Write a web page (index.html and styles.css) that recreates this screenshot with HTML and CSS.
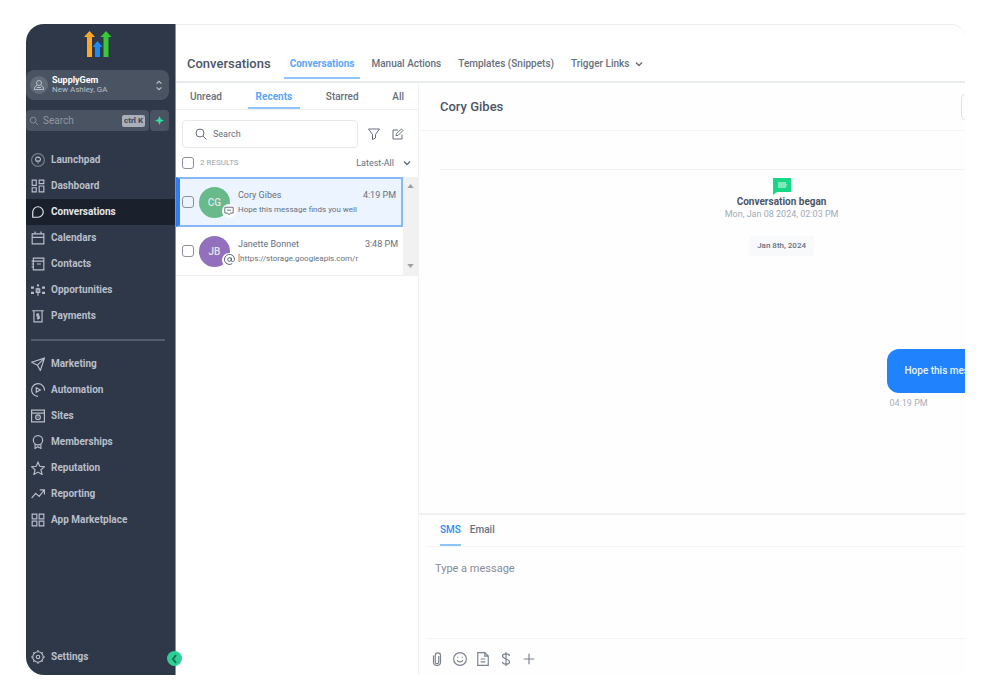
FILE: index.html
```
<!DOCTYPE html>
<html lang="en">
<head>
  <meta charset="UTF-8">
  <meta name="viewport" content="width=device-width, initial-scale=1.0">
  <title>Conversations</title>
  <link rel="stylesheet" href="styles.css">
</head>
<body>
  <div class="app">
    <aside class="sidebar">
      <svg class="logo" viewBox="0 0 28 27" width="28" height="27">
        <path fill="#ffa726" d="M5.500 0l5.500 6H8v20H3V6H0z"/>
        <path fill="#188bf6" d="M13.500 10l5 6H16v10h-5V16H8.500z"/>
        <path fill="#37ca37" d="M22 0l5.500 6h-3v20h-5V6h-3z"/>
      </svg>

      <button class="account">
        <span class="account-icon">
          <svg class="icon" viewBox="0 0 24 24" width="12" height="12"><circle cx="12" cy="8" r="5"/><path d="M8 13l-5 4v4h18v-4l-5-4M8 17h8"/></svg>
        </span>
        <span class="account-text">
          <strong>SupplyGem</strong>
          <span>New Ashley, GA</span>
        </span>
        <svg class="icon" viewBox="0 0 10 18" width="6" height="11"><path d="M1 6l4-4 4 4M1 12l4 4 4-4"/></svg>
      </button>

      <div class="quick">
        <label class="quick-search">
          <svg class="icon" viewBox="0 0 24 24" width="10" height="10"><circle cx="10" cy="10" r="7"/><path d="M15 15l7 7"/></svg>
          <input type="text" placeholder="Search" aria-label="Search">
          <kbd>ctrl K</kbd>
        </label>
        <button class="quick-add" aria-label="Quick actions">
          <svg viewBox="0 0 10 10" width="9" height="9"><path d="M5 0l1.500 3.500L10 5 6.500 6.500 5 10 3.500 6.500 0 5l3.500-1.500z" fill="#2be0a0"/></svg>
        </button>
      </div>

      <nav class="menu">
        <a href="#"><svg class="icon" viewBox="0 0 24 24"><circle cx="12" cy="12" r="11" opacity=".5"/><path d="M9 14c-3-4 0-7 3-7s6 3 3 7zM11 17h2"/></svg>Launchpad</a>
        <a href="#"><svg class="icon" viewBox="0 0 24 24"><path d="M2 2h7v9H2zM14 2h8v6h-8zM2 15h7v7H2zM14 12h8v10h-8z"/></svg>Dashboard</a>
        <a href="#" class="active"><svg class="icon" viewBox="0 0 24 24"><path d="M3 21v-9a9 9 0 1 1 9 9z"/></svg>Conversations</a>
        <a href="#"><svg class="icon" viewBox="0 0 24 24"><path d="M2 5h20v17H2zM2 11h20M7 1v5M17 1v5"/></svg>Calendars</a>
        <a href="#"><svg class="icon" viewBox="0 0 24 24"><path d="M4 2h18v20H4zM4 7h18M10 12h7M1 7h4M1 12h4M1 17h4"/></svg>Contacts</a>
        <a href="#"><svg class="icon" viewBox="0 0 24 24"><path d="M12 8v14M8 10h8M9 10v6h6v-6M1 7h3v2H1zM1 16h3v2H1zM20 7h3v2h-3zM20 16h3v2h-3z"/><circle cx="12" cy="4" r="1"/></svg>Opportunities</a>
        <a href="#"><svg class="icon" viewBox="0 0 24 24"><path d="M2 3h20M5 3v19h14V3M14 9h-4v3h4v4h-4M12 7v11"/></svg>Payments</a>
      </nav>
      <hr>
      <nav class="menu">
        <a href="#"><svg class="icon" viewBox="0 0 24 24"><path d="M1 9l22-7-7 21-5-9zM23 2L11 14"/></svg>Marketing</a>
        <a href="#"><svg class="icon" viewBox="0 0 24 24"><path d="M12 23A11 11 0 1 1 23 13M9 8v8l7-4z"/></svg>Automation</a>
        <a href="#"><svg class="icon" viewBox="0 0 24 24"><path d="M1 2h22v20H1zM1 7h22"/><circle cx="12" cy="14" r="4"/><path d="M12 13v2"/></svg>Sites</a>
        <a href="#"><svg class="icon" viewBox="0 0 24 24"><circle cx="12" cy="9" r="8"/><path d="M7 16v7l5-3 5 3v-7"/></svg>Memberships</a>
        <a href="#"><svg class="icon" viewBox="0 0 24 24"><path d="M12 2l3 7 8 1-6 5 2 8-7-4-7 4 2-8-6-5 8-1z"/></svg>Reputation</a>
        <a href="#"><svg class="icon" viewBox="0 0 24 24"><path d="M1 19l7-8 6 5 8-10M15 5h8v8"/></svg>Reporting</a>
        <a href="#"><svg class="icon" viewBox="0 0 24 24"><path d="M2 2h8v8H2zM14 2h8v8h-8zM2 14h8v8H2zM14 14h8v8h-8z"/></svg>App Marketplace</a>
      </nav>
      <nav class="menu menu-bottom">
        <a href="#"><svg class="icon" viewBox="0 0 24 24"><circle cx="12" cy="12" r="9"/><circle cx="12" cy="12" r="3"/><path d="M12 0v3M12 21v3M0 12h3M21 12h3M4 4l2 2M18 18l2 2M20 4l-2 2M6 18l-2 2"/></svg>Settings</a>
      </nav>
      <button class="collapse" aria-label="Collapse sidebar">
        <svg viewBox="0 0 10 10" width="10" height="10"><path d="M6 1L3 5l3 4" fill="none" stroke="#1b6b52" stroke-width="2"/></svg>
      </button>
    </aside>

    <main class="main">
      <header class="topbar">
        <h1>Conversations</h1>
        <nav class="topnav">
          <a href="#" class="active">Conversations</a>
          <a href="#">Manual Actions</a>
          <a href="#">Templates (Snippets)</a>
          <a href="#">Trigger Links
            <svg class="icon" viewBox="0 0 10 8" width="8" height="6"><path d="M1 2l4 4 4-4"/></svg>
          </a>
        </nav>
      </header>

      <div class="panes">
        <section class="inbox">
          <nav class="inbox-tabs">
            <a href="#">Unread</a>
            <a href="#" class="active">Recents</a>
            <a href="#">Starred</a>
            <a href="#">All</a>
          </nav>

          <div class="inbox-search">
            <label class="search-box">
              <svg class="icon" viewBox="0 0 24 24" width="12" height="12"><circle cx="10" cy="10" r="8"/><path d="M16 16l7 7"/></svg>
              <input type="text" placeholder="Search" aria-label="Search conversations">
            </label>
            <button aria-label="Filter"><svg class="icon" viewBox="0 0 24 24" width="12" height="12"><path d="M1 2h22l-8 11v7l-6 3V13z"/></svg></button>
            <button aria-label="New conversation"><svg class="icon" viewBox="0 0 24 24" width="12" height="12"><path d="M12 4H2v18h18V13M9 11l10-9 3 3-10 10H8z"/></svg></button>
          </div>

          <div class="results">
            <input type="checkbox" id="all">
            <label for="all">2 RESULTS</label>
            <button class="sort">Latest-All
              <svg class="icon" viewBox="0 0 10 8" width="8" height="6"><path d="M1 2l4 4 4-4"/></svg>
            </button>
          </div>

          <div class="list">
            <ul>
              <li class="selected">
                <input type="checkbox" aria-label="Select Cory Gibes">
                <span class="avatar green">CG
                  <span class="channel"><svg class="icon" viewBox="0 0 24 24" width="10" height="10"><path d="M2 3h20v14h-7l-3 4-3-4H2zM7 10h10"/></svg></span>
                </span>
                <div class="item">
                  <div class="item-top"><span>Cory Gibes</span><time>4:19 PM</time></div>
                  <p>Hope this message finds you well</p>
                </div>
              </li>
              <li>
                <input type="checkbox" aria-label="Select Janette Bonnet">
                <span class="avatar purple">JB
                  <span class="channel"><svg class="icon" viewBox="0 0 24 24" width="11" height="11"><circle cx="12" cy="12" r="4"/><path d="M16 8v6c0 4 7 3 7-2a11 11 0 1 0-5 9"/></svg></span>
                </span>
                <div class="item">
                  <div class="item-top"><span>Janette Bonnet</span><time>3:48 PM</time></div>
                  <p>[https://storage.googleapis.com/r</p>
                </div>
              </li>
            </ul>
            <div class="scroll">
              <svg viewBox="0 0 8 5" width="7" height="4"><path d="M0 5l4-5 4 5z"/></svg>
              <svg viewBox="0 0 8 5" width="7" height="4"><path d="M0 0l4 5 4-5z"/></svg>
            </div>
          </div>
        </section>

        <section class="chat">
          <div class="chat-inner">
            <header class="chat-header">
              <h2>Cory Gibes</h2>
              <button class="chat-action" aria-label="Contact actions"></button>
            </header>

            <div class="thread">
              <div class="began">
                <svg viewBox="0 0 18 17" width="18" height="17"><path fill="#17d985" d="M0 0h18v14H4l-4 3z"/><path fill="#7fe9bb" d="M5 4h8v6H5z"/><path fill="#7fe9bb" d="M12 6h2v2h-2z"/></svg>
                <strong>Conversation began</strong>
                <span>Mon, Jan 08 2024, 02:03 PM</span>
              </div>
              <span class="day">Jan 8th, 2024</span>
              <div class="message">
                <p>Hope this message finds you well</p>
                <time>04:19 PM</time>
              </div>
            </div>

            <div class="composer">
              <nav class="composer-tabs">
                <a href="#" class="active">SMS</a>
                <a href="#">Email</a>
              </nav>
              <textarea placeholder="Type a message" aria-label="Message"></textarea>
              <div class="tools">
                <button aria-label="Attach file"><svg class="icon" viewBox="0 0 24 24"><path d="M6 6v11a6 6 0 0 0 12 0V6a4 4 0 0 0-9 0v11a3 3 0 0 0 6 0V7"/></svg></button>
                <button aria-label="Emoji"><svg class="icon" viewBox="0 0 24 24"><circle cx="12" cy="12" r="11"/><path d="M7 14c2 4 8 4 10 0M8 8v2M16 8v2"/></svg></button>
                <button aria-label="Template"><svg class="icon" viewBox="0 0 24 24"><path d="M3 1h12l6 6v16H3zM15 1v6h6M8 12h8M8 17h8"/></svg></button>
                <button aria-label="Request payment"><svg class="icon" viewBox="0 0 24 24"><path d="M18 7c0-5-12-5-12 0 0 6 12 4 12 10 0 5-12 5-12 0M12 0v24"/></svg></button>
                <button aria-label="More"><svg class="icon" viewBox="0 0 24 24"><path d="M12 3v18M3 12h18"/></svg></button>
              </div>
            </div>
          </div>
        </section>
      </div>
    </main>
  </div>
</body>
</html>
```
FILE: styles.css
```
* {
  box-sizing: border-box;
}
body {
  margin: 0;
  padding: 24px 35px 25px 26px;
  min-height: 100vh;
  display: flex;
  background: #fff;
  color: #667080;
  font-family: Roboto, sans-serif;
  font-size: 10px;
  line-height: 12px;
}
h1, h2, p, ul {
  margin: 0;
  padding: 0;
}
a {
  color: inherit;
  text-decoration: none;
}
button, input, textarea {
  font: inherit;
  color: inherit;
  background: none;
  border: 0;
  padding: 0;
  margin: 0;
  outline: none;
}
button {
  display: flex;
  align-items: center;
  cursor: pointer;
}
svg {
  display: block;
  flex: none;
}
.icon {
  fill: none;
  stroke: currentColor;
  stroke-width: 2;
}
.app {
  flex: 1;
  min-width: 0;
  display: flex;
  border-radius: 18px;
}

/* sidebar */
.sidebar {
  position: relative;
  flex: none;
  width: 150px;
  display: flex;
  flex-direction: column;
  background: #2f3849;
  border-right: 1px solid #8b93a0;
  border-radius: 18px 0 0 18px;
  color: #b9bfc9;
}
.logo {
  margin: 7px 0 0 58px;
}
.account {
  height: 30px;
  margin: 12px 6px 0 0;
  padding: 0 7px 0 4px;
  gap: 4px;
  background: #4a5362;
  border-radius: 8px;
  text-align: left;
}
.account-icon {
  display: flex;
  align-items: center;
  justify-content: center;
  width: 18px;
  height: 18px;
  border-radius: 50%;
  background: #626b79;
}
.account-text {
  flex: 1;
  display: flex;
  flex-direction: column;
  font-size: 8px;
  line-height: 10px;
}
.account-text strong {
  font-size: 9px;
  color: #fff;
}
.quick {
  display: flex;
  gap: 1px;
  height: 21px;
  margin: 10px 6px 16px 0;
}
.quick-search {
  flex: 1;
  min-width: 0;
  display: flex;
  align-items: center;
  gap: 4px;
  padding: 0 4px 0 3px;
  background: #4a5362;
  border-radius: 4px;
  color: #9098a4;
}
.quick-search input {
  flex: 1;
  min-width: 0;
}
::placeholder {
  color: inherit;
  opacity: 1;
}
.quick-search kbd {
  padding: 0 2px;
  background: #a9afbb;
  border-radius: 2px;
  color: #3c4657;
  font: bold 8px/12px Roboto, sans-serif;
}
.quick-add {
  width: 19px;
  justify-content: center;
  background: #4a5362;
  border-radius: 4px;
}
.menu {
  display: flex;
  flex-direction: column;
  font-weight: 700;
}
.menu a {
  display: flex;
  align-items: center;
  gap: 6px;
  height: 26px;
  padding-left: 5px;
}
.menu svg {
  width: 14px;
  height: 14px;
}
.menu .active {
  background: #1a202c;
  color: #e4e7ec;
}
.sidebar hr {
  width: 134px;
  height: 2px;
  margin: 10px 0 10px 5px;
  border: 0;
  background: #535c6b;
}
.menu-bottom {
  margin-top: auto;
  margin-bottom: 5px;
}
.collapse {
  position: absolute;
  right: -7px;
  bottom: 9px;
  width: 15px;
  height: 15px;
  justify-content: center;
  border-radius: 50%;
  background: #2ad196;
}

/* main area */
.main {
  flex: 1;
  min-width: 0;
  display: flex;
  flex-direction: column;
  border-top: 1px solid #ececee;
  border-top-right-radius: 14px;
}
.topbar {
  display: flex;
  align-items: flex-end;
  height: 58px;
  padding-left: 11px;
  border-bottom: 2px solid #e8ebef;
}
.topbar h1 {
  margin-right: 13px;
  padding-bottom: 9px;
  font-size: 13px;
  line-height: 16px;
  font-weight: 500;
  color: #4c5666;
}
.topnav {
  display: flex;
  gap: 5px;
  margin-bottom: 2px;
  font-weight: 500;
  white-space: nowrap;
}
.topnav a {
  display: flex;
  align-items: center;
  gap: 6px;
  padding: 0 6px 7px;
  border-bottom: 2px solid transparent;
}
.topnav .active, .inbox-tabs .active {
  color: #59a6fa;
  border-color: #8fc5fb;
  font-weight: 700;
}
.panes {
  flex: 1;
  min-height: 0;
  display: flex;
}

/* conversation list */
.inbox {
  flex: none;
  width: 243px;
  border-right: 1px solid #f0f1f3;
}
.inbox-tabs {
  display: flex;
  justify-content: space-between;
  height: 27px;
  padding: 0 6px;
  border-bottom: 1px solid #eff0f2;
  font-weight: 500;
}
.inbox-tabs a {
  padding: 8px 8px 0;
  border-bottom: 2px solid transparent;
}
.inbox-search {
  display: flex;
  align-items: center;
  gap: 8px;
  padding: 10px 12px 0 6px;
}
.inbox-search button {
  padding: 0 2px;
}
.search-box {
  flex: 1;
  min-width: 0;
  display: flex;
  align-items: center;
  gap: 6px;
  height: 28px;
  padding-left: 12px;
  border: 1px solid #e6e8eb;
  border-radius: 4px;
  font-size: 9px;
}
.search-box input {
  width: 100%;
}
input[type="checkbox"] {
  appearance: none;
  flex: none;
  width: 12px;
  height: 12px;
  border: 1px solid #8d929a;
  border-radius: 3px;
}
.results {
  display: flex;
  align-items: center;
  gap: 6px;
  height: 29px;
  padding: 0 7px 0 6px;
}
.results label {
  flex: 1;
  font-size: 8px;
  color: #9da2aa;
}
.sort {
  gap: 9px;
  font-size: 9px;
}
.list {
  display: flex;
  border-bottom: 1px solid #f1f1f3;
}
.list ul {
  flex: 1;
  min-width: 0;
  list-style: none;
}
.list li {
  display: flex;
  align-items: center;
  gap: 5px;
  height: 48px;
  padding: 0 5px 0 6px;
}
.list .selected {
  height: 50px;
  padding: 0 5px 0 2px;
  background: #ebf4ff;
  border: 2px solid #85b8f8;
  border-left: 4px solid #2e7cf6;
}
.avatar {
  position: relative;
  flex: none;
  width: 31px;
  height: 31px;
  border-radius: 50%;
  color: #e3e6ea;
  font-weight: 500;
  line-height: 31px;
  text-align: center;
}
.green {
  background: #68ba8a;
}
.purple {
  background: #9270bd;
}
.channel {
  position: absolute;
  right: -6px;
  bottom: 0;
  display: flex;
  align-items: center;
  justify-content: center;
  width: 14px;
  height: 14px;
  border-radius: 50%;
  background: #fff;
  color: #4f5968;
}
.item {
  flex: 1;
  min-width: 0;
  padding-left: 3px;
  font-size: 9px;
}
.item-top {
  display: flex;
  justify-content: space-between;
  margin-bottom: 4px;
}
.item p {
  overflow: hidden;
  white-space: nowrap;
  font-size: 8px;
  line-height: 10px;
}
.scroll {
  display: flex;
  flex-direction: column;
  justify-content: space-between;
  align-items: center;
  width: 15px;
  padding: 7px 0;
  background: #f1f1f1;
  fill: #a0a0a0;
}

/* chat, runs past the right edge of the window */
.chat {
  flex: 1;
  min-width: 0;
  overflow: hidden;
  background: #fefefe;
}
.chat-inner {
  width: 133%;
  height: 100%;
  display: flex;
  flex-direction: column;
}
.chat-header {
  display: flex;
  align-items: center;
  justify-content: space-between;
  height: 48px;
  padding: 0 22px 0 21px;
  border-bottom: 1px solid #f4f4f6;
}
.chat-header h2 {
  font-size: 13px;
  font-weight: 500;
  color: #4c5666;
}
.chat-action {
  width: 162px;
  height: 26px;
  border: 1px solid #dfe3e8;
  border-radius: 4px;
}
.thread {
  flex: 1;
  display: flex;
  flex-direction: column;
  align-items: center;
  margin: 38px 22px 0 21px;
  border-top: 1px solid #f2f2f4;
}
.began {
  display: flex;
  flex-direction: column;
  align-items: center;
  margin-top: 8px;
}
.began strong {
  margin-top: 1px;
  font-weight: 700;
  color: #4c5666;
}
.began span {
  font-size: 9px;
  color: #a3abb7;
}
.day {
  margin-top: 16px;
  padding: 4px 8px;
  border-radius: 4px;
  background: #f7f9fb;
  font-size: 8px;
  font-weight: 500;
}
.message {
  align-self: flex-end;
  margin: auto 51px 104px 0;
}
.message p {
  padding: 16px 18px;
  border-radius: 12px;
  background: #2182fe;
  color: #e8f2ff;
  font-weight: 500;
  white-space: nowrap;
}
.message time {
  display: block;
  margin: 4px 0 0 3px;
  font-size: 9px;
  color: #a9aeb6;
}

/* composer */
.composer {
  border-top: 2px solid #f1f1f3;
  padding-left: 7px;
}
.composer-tabs {
  display: flex;
  gap: 9px;
  height: 32px;
  padding-left: 14px;
  border-bottom: 1px solid #f4f4f6;
}
.composer-tabs a {
  padding-top: 9px;
  border-bottom: 2px solid transparent;
  font-weight: 500;
}
.composer-tabs .active {
  color: #2e8bfb;
  border-color: #8fc5fb;
}
.composer textarea {
  display: block;
  width: 100%;
  height: 92px;
  padding: 16px 9px;
  border-bottom: 1px solid #f4f4f6;
  resize: none;
  font-size: 11px;
  color: #858c97;
}
.tools {
  display: flex;
  align-items: center;
  gap: 9px;
  height: 36px;
  padding: 4px 0 0 4px;
  color: #7b828e;
}
.tools svg {
  width: 14px;
  height: 14px;
}
```
